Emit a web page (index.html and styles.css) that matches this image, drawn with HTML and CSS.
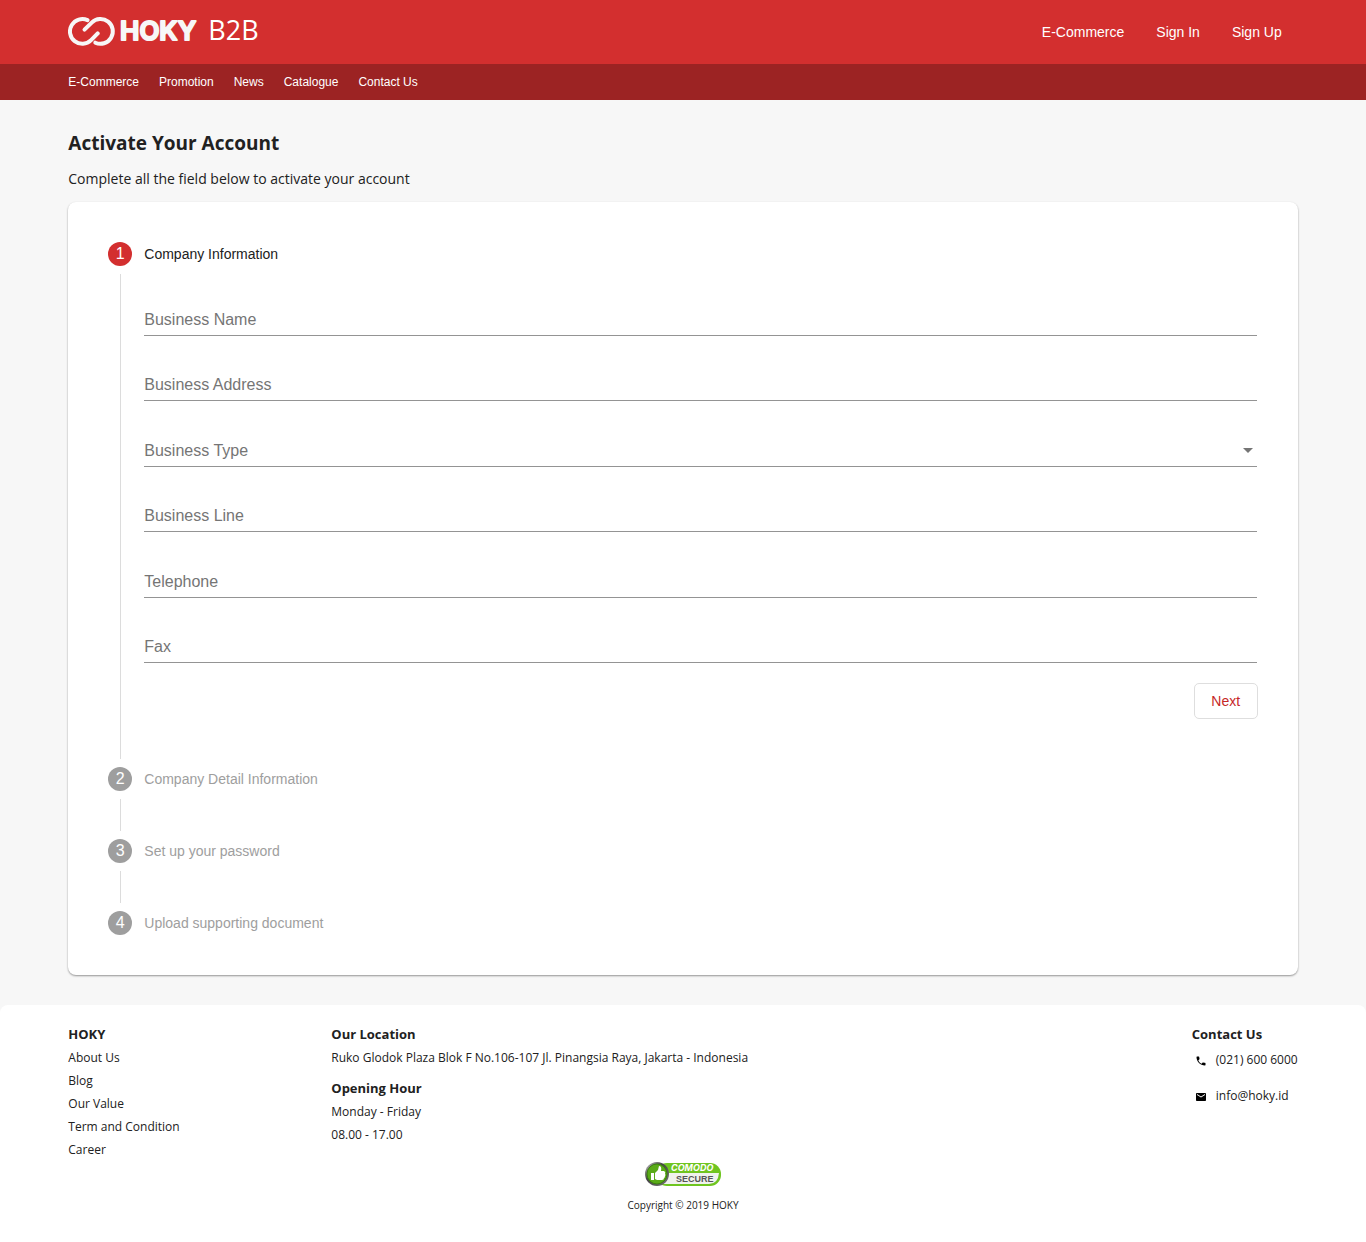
FILE: index.html
```html
<!DOCTYPE html>
<html lang="en">
<head>
<meta charset="utf-8">
<meta name="viewport" content="width=device-width, initial-scale=1">
<title>HOKY B2B - Activate Your Account</title>
<link rel="stylesheet" href="styles.css">
</head>
<body>
<header>
  <div class="topbar">
    <a class="brand" href="#">
      <svg class="brand-logo" viewBox="0 0 130 32" role="img" aria-label="HOKY">
        <g class="brand-rings">
          <path d="M19.500 4.100A12.400 12.400 0 1 0 23.100 24.200L29.700 17.400"/>
          <path d="M27.300 26.700A12.400 12.400 0 1 0 23.700 6.600L16.500 13.700"/>
        </g>
        <text class="brand-name" x="52" y="24">HOKY</text>
      </svg>
      <span class="brand-suffix">B2B</span>
    </a>
    <nav class="account-nav" aria-label="Account">
      <a href="#">E-Commerce</a>
      <a href="#">Sign In</a>
      <a href="#">Sign Up</a>
    </nav>
  </div>
  <nav class="subnav" aria-label="Main">
    <a href="#">E-Commerce</a>
    <a href="#">Promotion</a>
    <a href="#">News</a>
    <a href="#">Catalogue</a>
    <a href="#">Contact Us</a>
  </nav>
</header>

<main>
  <h1>Activate Your Account</h1>
  <p class="lead">Complete all the field below to activate your account</p>
  <section class="card">
    <ol class="stepper">
      <li class="step step-active">
        <div class="step-header"><span class="step-number">1</span><span>Company Information</span></div>
        <form class="step-content">
          <div class="fields">
            <input class="field" type="text" placeholder="Business Name" aria-label="Business Name">
            <input class="field" type="text" placeholder="Business Address" aria-label="Business Address">
            <div class="select-wrap">
              <select class="field" aria-label="Business Type">
                <option>Business Type</option>
              </select>
              <svg class="select-arrow" viewBox="0 0 10 5" aria-hidden="true"><path d="M0 0h10L5 5z"/></svg>
            </div>
            <input class="field" type="text" placeholder="Business Line" aria-label="Business Line">
            <input class="field" type="tel" placeholder="Telephone" aria-label="Telephone">
            <input class="field" type="tel" placeholder="Fax" aria-label="Fax">
          </div>
          <button class="next" type="button">Next</button>
        </form>
      </li>
      <li class="step">
        <div class="step-header"><span class="step-number">2</span><span>Company Detail Information</span></div>
        <div class="step-content"></div>
      </li>
      <li class="step">
        <div class="step-header"><span class="step-number">3</span><span>Set up your password</span></div>
        <div class="step-content"></div>
      </li>
      <li class="step">
        <div class="step-header"><span class="step-number">4</span><span>Upload supporting document</span></div>
      </li>
    </ol>
  </section>
</main>

<footer>
  <div class="footer-columns">
    <section class="footer-links">
      <h2>HOKY</h2>
      <a href="#">About Us</a>
      <a href="#">Blog</a>
      <a href="#">Our Value</a>
      <a href="#">Term and Condition</a>
      <a href="#">Career</a>
    </section>
    <section class="footer-location">
      <h2>Our Location</h2>
      <p>Ruko Glodok Plaza Blok F No.106-107 Jl. Pinangsia Raya, Jakarta - Indonesia</p>
      <h2 class="hours">Opening Hour</h2>
      <p>Monday - Friday</p>
      <p>08.00 - 17.00</p>
    </section>
    <section class="footer-contact">
      <h2>Contact Us</h2>
      <a href="#"><svg viewBox="0 0 24 24" aria-hidden="true"><path d="M6.620 10.790c1.440 2.830 3.760 5.140 6.590 6.590l2.200-2.200c.27-.27.67-.36 1.020-.24 1.120.37 2.330.57 3.570.57.55 0 1 .45 1 1V20c0 .55-.45 1-1 1-9.390 0-17-7.610-17-17 0-.55.45-1 1-1h3.500c.55 0 1 .45 1 1 0 1.250.2 2.450.57 3.570.11.35.03.74-.25 1.020l-2.200 2.200z"/></svg>(021) 600 6000</a>
      <a href="#"><svg viewBox="0 0 24 24" aria-hidden="true"><path d="M20 4H4c-1.100 0-2 .9-2 2v12c0 1.100.9 2 2 2h16c1.100 0 2-.9 2-2V6c0-1.100-.9-2-2-2zm0 4l-8 5-8-5V6l8 5 8-5v2z"/></svg>info@hoky.id</a>
    </section>
  </div>
  <div class="footer-bottom">
    <svg class="secure-badge" viewBox="0 0 78 26" role="img" aria-label="Comodo Secure">
      <defs>
        <linearGradient id="ring" x1="0" y1="0" x2="1" y2="1"><stop offset="0" stop-color="#ccc"/><stop offset=".4" stop-color="#444"/><stop offset="1" stop-color="#777"/></linearGradient>
      </defs>
      <rect x="12" y="2" width="65" height="23" rx="11" fill="#6fc520"/>
      <path d="M13 12H75Q74 23 65 23H13z" fill="#f0f2ee"/>
      <circle cx="13" cy="13" r="12" fill="url(#ring)"/>
      <circle cx="13" cy="13" r="10" fill="#5aaa18" stroke="#3b820c"/>
      <path d="M7 12h3v7H7zM11 12l3-3 1-4q3 0 2 5h3q2 1 1 3 1 1 0 2 0 2-1 2 0 2-2 2h-5l-2-1z" fill="#fff"/>
      <text class="badge-top" x="27" y="10">COMODO</text>
      <text class="badge-bottom" x="32" y="21">SECURE</text>
    </svg>
    <small>Copyright © 2019 HOKY</small>
  </div>
</footer>
</body>
</html>
```
FILE: styles.css
```css
* {
  box-sizing: border-box;
}

body {
  margin: 0;
  background: #f7f7f7;
  color: #212121;
  font-family: "Open Sans", sans-serif;
}

a {
  color: inherit;
  text-decoration: none;
}

h1, h2, p, ol {
  margin: 0;
  padding: 0;
}

/* Header */
.topbar,
.subnav {
  display: flex;
  align-items: center;
  padding: 0 5%;
  color: #fff;
  font-family: "Liberation Sans", sans-serif;
}

.topbar {
  justify-content: space-between;
  height: 64px;
  background: #d32f2f;
}

.brand {
  display: flex;
  align-items: flex-start;
  gap: 10px;
}

.brand-logo {
  width: 130px;
  height: 32px;
}

.brand-rings {
  fill: none;
  stroke: #f7f7f7;
  stroke-width: 4;
  stroke-linecap: round;
}

.brand-name {
  fill: #f7f7f7;
  stroke: #f7f7f7;
  stroke-width: 2;
  stroke-linejoin: round;
  font: 600 26px Inter, sans-serif;
}

.brand-suffix {
  font: 400 27px/28px "Open Sans", sans-serif;
}

.account-nav {
  display: flex;
  gap: 32px;
  padding-right: 16px;
  font-size: 14px;
}

.subnav {
  gap: 20px;
  height: 36px;
  background: #9c2323;
  font-size: 12px;
}

/* Page */
main {
  padding: 28px 5% 30px;
}

h1 {
  font-size: 19px;
  font-weight: 700;
  line-height: 30px;
}

.lead {
  margin-top: 8px;
  font-size: 14px;
  line-height: 26px;
}

.card {
  margin-top: 10px;
  padding: 40px;
  border-radius: 8px;
  background: #fff;
  box-shadow: 0 1px 2px rgba(0, 0, 0, .4);
  font-family: "Liberation Sans", sans-serif;
}

.stepper {
  list-style: none;
}

.step-header {
  display: flex;
  align-items: center;
  gap: 12px;
  color: #9e9e9e;
  font-size: 14px;
}

.step-number {
  width: 24px;
  border-radius: 50%;
  background: #9e9e9e;
  color: #fff;
  font-size: 16px;
  line-height: 24px;
  text-align: center;
}

.step-active .step-header {
  color: #212121;
}

.step-active .step-number {
  background: #d32f2f;
}

.step-content {
  display: flex;
  flex-direction: column;
  min-height: 32px;
  margin: 8px 0 8px 12px;
  padding-left: 23px;
  border-left: 1px solid #dcdcdc;
}

.step-active .step-content {
  padding-top: 29px;
  padding-bottom: 40px;
}

.fields {
  display: flex;
  flex-direction: column;
  justify-content: space-between;
  min-height: 360px;
  padding-right: 1px;
}

.field {
  display: block;
  width: 100%;
  height: 33px;
  margin: 0;
  padding: 2px 0 0;
  border: 0;
  border-bottom: 1px solid #949494;
  border-radius: 0;
  background: transparent;
  color: #757575;
  font: 16px "Liberation Sans", sans-serif;
  appearance: none;
}

.field::placeholder {
  color: #757575;
}

.select-wrap {
  position: relative;
}

.select-arrow {
  position: absolute;
  top: 14px;
  right: 4px;
  width: 10px;
  height: 5px;
  fill: #757575;
  pointer-events: none;
}

.next {
  align-self: flex-end;
  width: 64px;
  height: 36px;
  margin-top: 20px;
  border: 1px solid #dedede;
  border-radius: 5px;
  background: #fff;
  color: #c62828;
  font: 14px "Liberation Sans", sans-serif;
}

/* Footer */
footer {
  padding: 18px 5% 28px;
  border-radius: 8px 8px 0 0;
  background: #fff;
  font-size: 12px;
  line-height: 23px;
}

.footer-columns {
  display: flex;
}

.footer-links {
  display: flex;
  flex-direction: column;
  flex: 0 0 263px;
}

.footer-location {
  flex: 1;
}

h2 {
  font-size: 13px;
  font-weight: 700;
  line-height: 23px;
}

.hours {
  margin-top: 8px;
}

.footer-contact a {
  display: flex;
  align-items: center;
  gap: 9px;
  height: 26px;
  margin-bottom: 10px;
  padding-left: 3px;
}

.footer-contact svg {
  width: 12px;
  height: 12px;
  margin-top: 3px;
}

.footer-bottom {
  display: flex;
  flex-direction: column;
  align-items: center;
}

.secure-badge {
  width: 78px;
  height: 26px;
}

.badge-top {
  fill: #fff;
  font: italic 700 9px Inter, sans-serif;
}

.badge-bottom {
  fill: #555;
  font: 700 9px "Liberation Sans", sans-serif;
}

small {
  margin-top: 8px;
  font-size: 10px;
  line-height: 20px;
}
```
